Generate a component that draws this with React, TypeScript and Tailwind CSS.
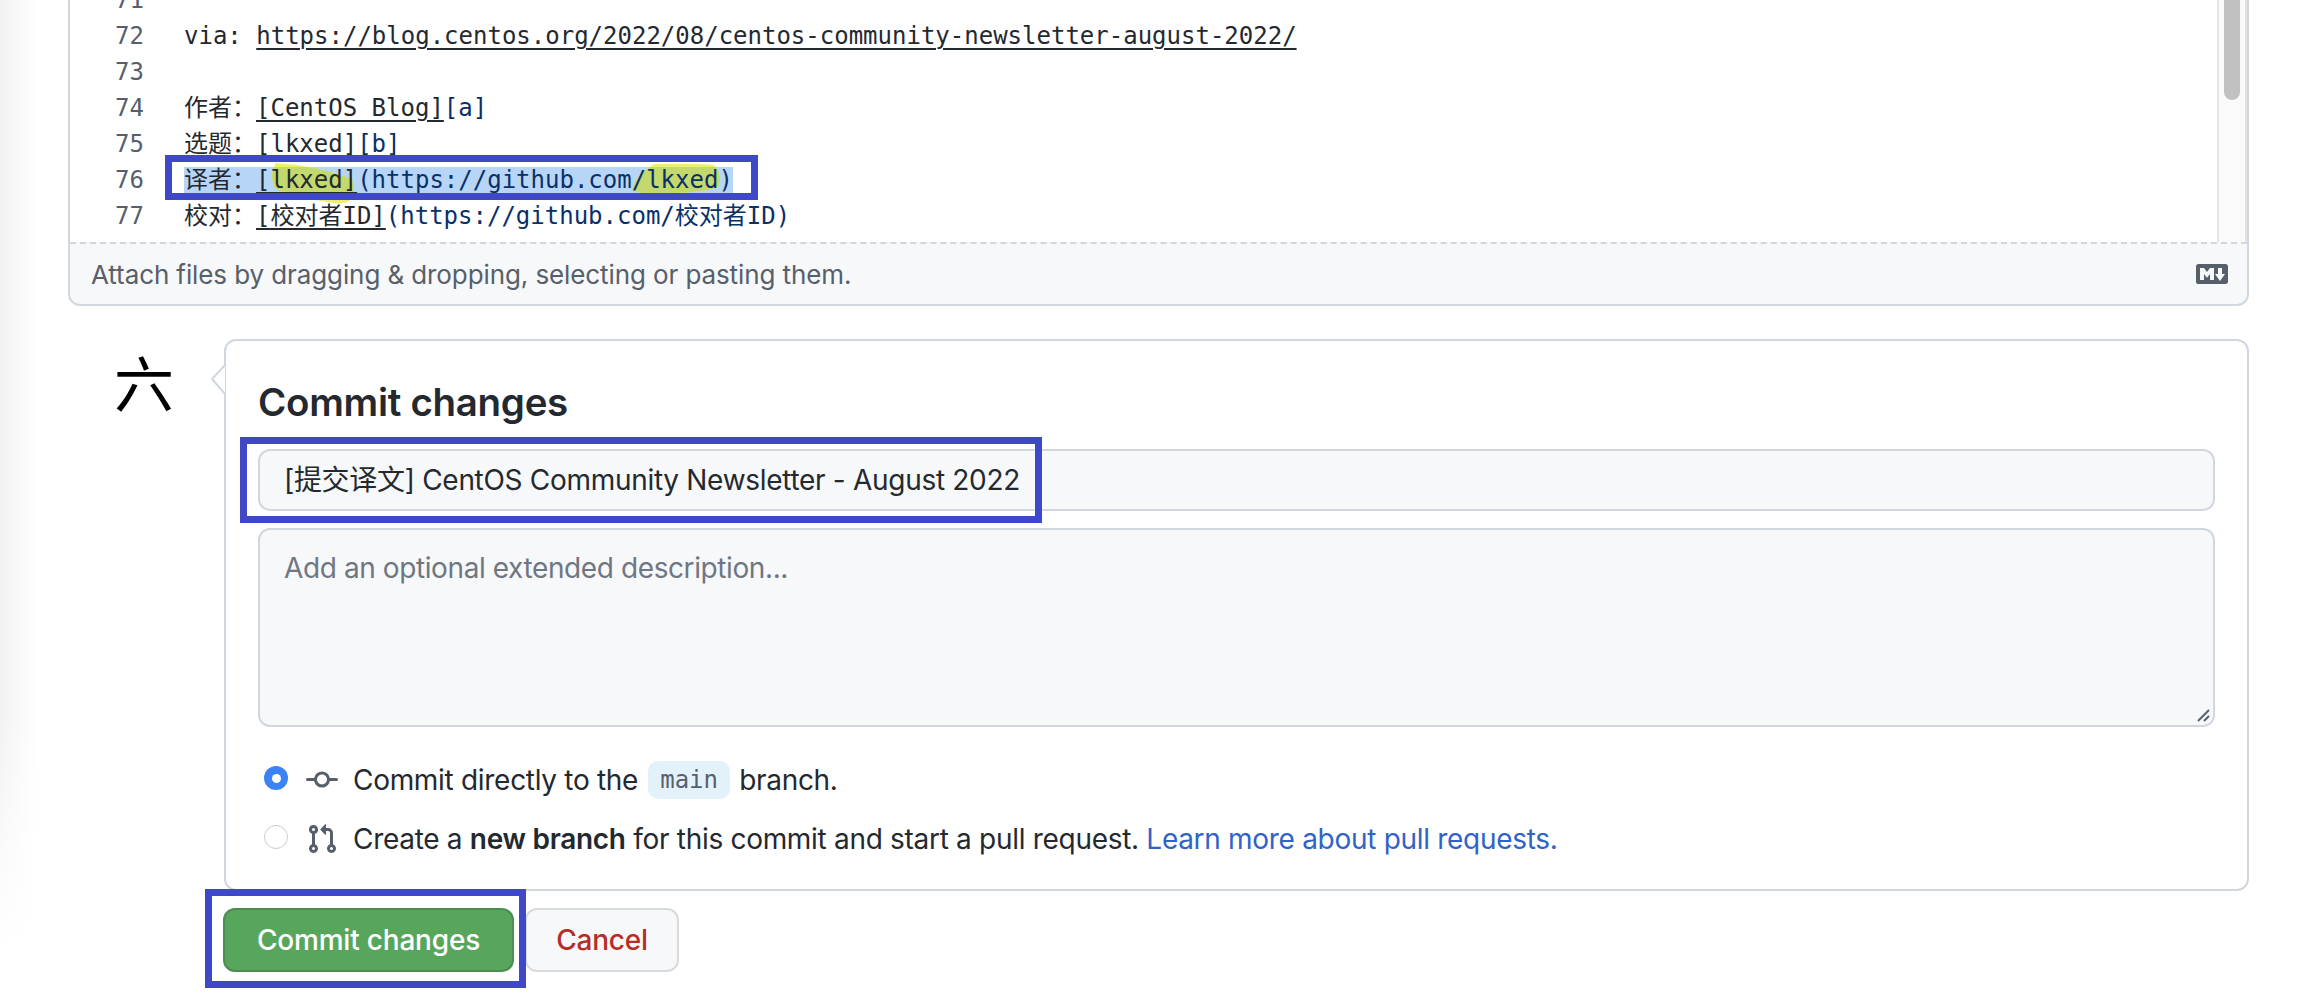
const SANS = "font-['Inter','Noto_Sans_CJK_SC',sans-serif]";

const BlueBox = ({ className }: { className: string }) => (
  <div className={`absolute border-[7px] border-[#3f48c6] ${className}`} />
);

const CodeLine = ({ n, children }: { n: number; children?: React.ReactNode }) => (
  <div className="flex h-[36px] items-center leading-[36px]">
    <span className="w-[74px] shrink-0 text-right text-[#57606a]">{n}</span>
    <span className="ml-[40px] whitespace-pre text-[#24292f]">{children}</span>
  </div>
);

const Link = ({ children }: { children: React.ReactNode }) => (
  <span className="underline decoration-[1.5px] underline-offset-[4px]">{children}</span>
);

// the two highlighter strokes sit under the text of line 76
const HighlightStrokes = () => {
  const strokes = (
    <>
      <path d="M92 -4 Q130 -2 168 12 Q172 24 168 32 Q160 38 150 36 Q110 30 92 22 Q84 10 92 -4Z" />
      <path d="M470 -3 Q510 -4 530 -2 Q540 10 534 20 Q515 27 470 26 Q445 27 449 20 Q452 8 470 -3Z" />
    </>
  );
  return (
    <svg className="absolute left-0 top-0 -z-10 overflow-visible" width="549" height="27" viewBox="0 0 549 27">
      <defs>
        <clipPath id="selectionBand">
          <rect x="0" y="0" width="549" height="27" />
        </clipPath>
      </defs>
      <g fill="#eef06c">{strokes}</g>
      <g fill="#c3d86d" clipPath="url(#selectionBand)">{strokes}</g>
    </svg>
  );
};

const Editor = () => (
  <div className="ml-[68px] w-[2181px] overflow-hidden rounded-b-[12px] border-x-2 border-b-2 border-[#d0d7de] bg-[#f6f8fa]">
    <div className="flex h-[242px] overflow-hidden bg-white">
      <div className="-mt-[18px] flex-1 font-['DejaVu_Sans_Mono','Noto_Sans_CJK_SC',monospace] text-[24px]">
        <CodeLine n={71} />
        <CodeLine n={72}>
          via: <Link>https://blog.centos.org/2022/08/centos-community-newsletter-august-2022/</Link>
        </CodeLine>
        <CodeLine n={73} />
        <CodeLine n={74}>
          作者：<Link>[CentOS Blog]</Link>
          <span className="text-[#0a3069]">[a]</span>
        </CodeLine>
        <CodeLine n={75}>
          选题：<Link>[lkxed]</Link>
          <span className="text-[#0a3069]">[b]</span>
        </CodeLine>
        <CodeLine n={76}>
          <span className="relative isolate inline-block h-[27px] bg-[#b7d6f7] leading-[27px]">
            <HighlightStrokes />
            译者：<Link>[lkxed]</Link>
            <span className="text-[#0a3069]">(https://github.com/lkxed)</span>
          </span>
        </CodeLine>
        <CodeLine n={77}>
          校对：<Link>[校对者ID]</Link>
          <span className="text-[#0a3069]">(https://github.com/校对者ID)</span>
        </CodeLine>
      </div>
      <div className="w-[30px] shrink-0 border-x-2 border-[#e3e3e3] bg-[#fafafa] px-[5px]">
        <div className="h-[100px] rounded-b-full bg-[#c1c1c1]" />
      </div>
    </div>
    <div className="flex h-[62px] items-center justify-between border-t-2 border-dashed border-[#d0d7de] pl-[21px] pr-[19px]">
      <span className={`${SANS} text-[26px] tracking-[-0.1px] text-[#57606a]`}>
        Attach files by dragging &amp; dropping, selecting or pasting them.
      </span>
      <svg viewBox="0 0 16 16" width="32" height="32" fill="#57606a">
        <path d="M14.85 3c.63 0 1.15.52 1.14 1.15v7.7c0 .63-.51 1.15-1.15 1.15H1.15C.52 13 0 12.48 0 11.84V4.15C0 3.52.52 3 1.15 3ZM9 11V5H7L5.5 7 4 5H2v6h2V8l1.5 1.92L7 8v3Zm2.99.5L14.5 8H13V5h-2v3H9.5Z" />
      </svg>
    </div>
  </div>
);

const CommitCard = () => (
  <div className="relative ml-[52px] h-[552px] flex-1 rounded-[12px] border-2 border-[#d0d7de] bg-white px-[32px]">
    <svg className="absolute -left-[16px] top-[24px]" width="16" height="30" viewBox="0 0 16 30">
      <path d="M15 0 L2 14 L15 29" fill="white" stroke="#d0d7de" strokeWidth="2" />
    </svg>
    <h2 className={`${SANS} mt-[36px] h-[72px] text-[38.5px] leading-[50px] font-semibold tracking-[-0.3px] text-[#24292f]`}>
      Commit changes
    </h2>
    <div className={`${SANS} flex h-[62px] items-center rounded-[12px] border-2 border-[#d0d7de] bg-[#f6f8fa] px-[24px] text-[28px] tracking-[-0.3px] text-[#24292f]`}>
      [提交译文] CentOS Community Newsletter - August 2022
    </div>
    <div className="relative mt-[17px] h-[199px] rounded-[12px] border-2 border-[#d0d7de] bg-[#f6f8fa] px-[24px] pt-[20px]">
      <span className={`${SANS} text-[28px] leading-[36px] tracking-[-0.4px] text-[#6e7781]`}>
        Add an optional extended description...
      </span>
      <svg className="absolute bottom-[2px] right-[2px]" width="16" height="16" viewBox="0 0 16 16" stroke="#57606a" strokeWidth="2">
        <line x1="3" y1="14" x2="14" y2="3" />
        <line x1="9" y1="14" x2="14" y2="9" />
      </svg>
    </div>
    <div className={`${SANS} mt-[33px] flex h-[40px] items-center text-[28px] tracking-[-0.3px] text-[#24292f]`}>
      <span className="-mt-[4px] ml-[6px] flex h-[24px] w-[24px] items-center justify-center rounded-full bg-[#3b82f6]">
        <span className="h-[9px] w-[9px] rounded-full bg-white" />
      </span>
      <svg className="ml-[18px]" viewBox="0 0 16 16" width="32" height="32" fill="#57606a">
        <path d="M11.93 8.5a4.002 4.002 0 0 1-7.86 0H.75a.75.75 0 0 1 0-1.5h3.32a4.002 4.002 0 0 1 7.86 0h3.32a.75.75 0 0 1 0 1.5Zm-1.43-.75a2.5 2.5 0 1 0-5 0 2.5 2.5 0 0 0 5 0Z" />
      </svg>
      <span className="ml-[15px]">Commit directly to the</span>
      <span className="ml-[10px] flex h-[38px] w-[82px] items-center justify-center rounded-[10px] bg-[#e3f1fb] font-['DejaVu_Sans_Mono',monospace] text-[24px] tracking-normal text-[#57606a]">
        main
      </span>
      <span className="ml-[9px]">branch.</span>
    </div>
    <div className={`${SANS} mt-[19px] flex h-[40px] items-center text-[28px] tracking-[-0.3px] text-[#24292f]`}>
      <span className="-mt-[5px] ml-[6px] h-[24px] w-[24px] rounded-full border border-[#cccccc] bg-white" />
      <svg className="ml-[18px]" viewBox="0 0 16 16" width="32" height="32" fill="#57606a">
        <path d="M1.5 3.25a2.25 2.25 0 1 1 3 2.122v5.256a2.251 2.251 0 1 1-1.5 0V5.372A2.25 2.25 0 0 1 1.5 3.25Zm5.677-.177L9.573.677A.25.25 0 0 1 10 .854V2.5h1A2.5 2.5 0 0 1 13.5 5v5.628a2.251 2.251 0 1 1-1.5 0V5a1 1 0 0 0-1-1h-1v1.646a.25.25 0 0 1-.427.177L7.177 3.427a.25.25 0 0 1 0-.354ZM3.75 2.5a.75.75 0 1 0 0 1.5.75.75 0 0 0 0-1.5Zm0 9.5a.75.75 0 1 0 0 1.5.75.75 0 0 0 0-1.5Zm8.25.75a.75.75 0 1 0 1.5 0 .75.75 0 0 0-1.5 0Z" />
      </svg>
      <span className="ml-[15px] whitespace-pre">
        Create a <b className="font-semibold">new branch</b> for this commit and start a pull request.{" "}
        <a className="text-[#2f63c9]">Learn more about pull requests.</a>
      </span>
    </div>
  </div>
);

export default function App() {
  return (
    <div className="relative h-[1004px] w-[2308px] overflow-hidden bg-white">
      <div className="absolute left-0 top-0 h-[950px] w-[36px] bg-linear-to-r from-[#f2f2f2] to-white [mask-image:linear-gradient(to_bottom,black_75%,transparent)]" />
      <Editor />
      <div className="mt-[33px] flex w-[2249px] pl-[114px]">
        <span className="mt-[6px] h-[72px] w-[58px] shrink-0 font-['Noto_Sans_CJK_SC',sans-serif] text-[60px] leading-[72px] text-black">六</span>
        <CommitCard />
      </div>
      <div className={`${SANS} ml-[223px] mt-[17px] flex gap-[11px] text-[28px] tracking-[-0.2px]`}>
        <button className="h-[64px] w-[291px] rounded-[12px] border-2 border-[#4b8e50] bg-[#58a55c] font-medium text-white">
          Commit changes
        </button>
        <button className="h-[64px] w-[154px] rounded-[12px] border-2 border-[#d8dbde] bg-[#f6f8fa] font-medium text-[#b62d27]">
          Cancel
        </button>
      </div>
      <BlueBox className="left-[165px] top-[155px] h-[45px] w-[593px]" />
      <BlueBox className="left-[240px] top-[437px] h-[86px] w-[802px]" />
      <BlueBox className="left-[205px] top-[889px] h-[99px] w-[321px]" />
    </div>
  );
}
